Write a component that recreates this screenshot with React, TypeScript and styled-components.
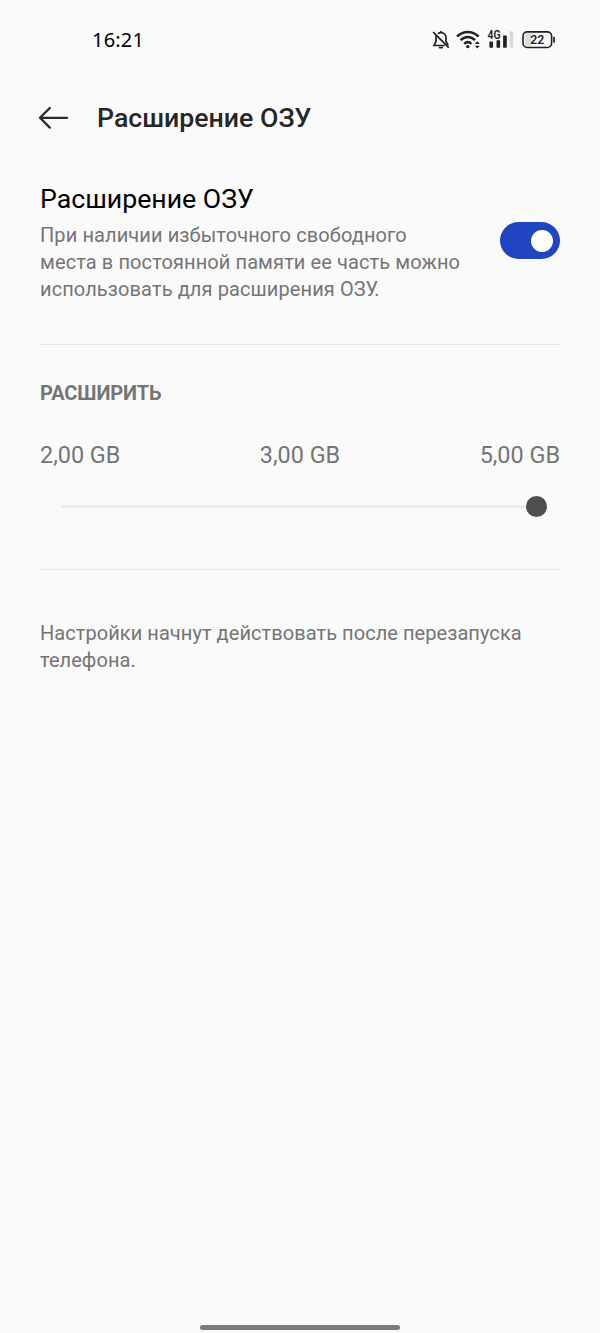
import React from "react";
import styled, { createGlobalStyle } from "styled-components";

const GlobalStyle = createGlobalStyle`
  * { box-sizing: border-box; }
  body { margin: 0; background: #fafafa; }
`;

const Screen = styled.div`
  display: flex;
  flex-direction: column;
  width: 600px;
  height: 1333px;
  background: #fafafa;
  color: #757575;
  font-family: Roboto, sans-serif;
`;

const StatusBar = styled.header`
  display: flex;
  align-items: center;
  justify-content: space-between;
  height: 80px;
  padding: 0 44px 0 92px;
`;

const Clock = styled.time`
  color: #000;
  font: 400 20px/24px "Noto Sans", sans-serif;
  letter-spacing: 0.2px;
`;

const StatusIcons = styled.div`
  display: flex;
  align-items: center;
  gap: 6px;
  color: #222;
  svg { display: block; }
`;

const TitleBar = styled.div`
  display: flex;
  align-items: center;
  gap: 28px;
  height: 76px;
  padding: 0 38px;
`;

const BackButton = styled.button`
  display: flex;
  padding: 0;
  border: 0;
  background: none;
  color: #2a2a2a;
`;

const Title = styled.h1`
  margin: 0;
  color: #262626;
  font-size: 26.7px;
  line-height: 32px;
  font-weight: 500;
`;

const Content = styled.main`
  display: flex;
  flex-direction: column;
  flex: 1;
  padding: 0 40px;
`;

const SettingRow = styled.section`
  display: flex;
  justify-content: space-between;
  height: 189px;
  padding-top: 26px;
  border-bottom: 1px solid #e6e6e6;
`;

const SettingName = styled.h2`
  margin: 0 0 6px;
  color: #000;
  font-size: 26.7px;
  line-height: 34px;
  font-weight: 400;
`;

const Paragraph = styled.p<{ $width: number }>`
  width: ${({ $width }) => $width}px;
  margin: 0;
  font-size: 20px;
  line-height: 27px;
  letter-spacing: ${({ $width }) => ($width < 500 ? 0.1 : 0.06)}px;
`;

const Toggle = styled.button`
  display: flex;
  align-items: center;
  justify-content: flex-end;
  width: 60px;
  height: 37px;
  margin-top: 40px;
  padding: 0 7px;
  border: 0;
  border-radius: 19px;
  background: #2045c0;
`;

const Knob = styled.span`
  width: 22px;
  height: 22px;
  border-radius: 50%;
  background: #fff;
`;

const ExpandSection = styled.section`
  height: 225px;
  padding-top: 35px;
  border-bottom: 1px solid #e6e6e6;
`;

const SectionLabel = styled.h3`
  margin: 0;
  font-size: 20px;
  line-height: 26px;
  font-weight: 700;
  letter-spacing: -0.1px;
`;

const Sizes = styled.div`
  display: flex;
  justify-content: space-between;
  margin-top: 34px;
  font-size: 23.4px;
  line-height: 30px;
`;

const Slider = styled.div`
  display: flex;
  align-items: center;
  height: 21px;
  margin: 26px 13px 0 21px;
`;

const Track = styled.div`
  flex: 1;
  height: 3px;
  border-radius: 2px 0 0 2px;
  background: #ebebeb;
`;

const Thumb = styled.div`
  width: 21px;
  height: 21px;
  border-radius: 50%;
  background: #4e4e4e;
`;

const Note = styled.div`
  padding-top: 50px;
`;

const NavigationHandle = styled.div`
  align-self: center;
  width: 200px;
  height: 5px;
  margin-bottom: 3px;
  border-radius: 3px;
  background: #7c7c7c;
`;

const MutedBell = () => (
  <svg width="18" height="20" viewBox="0 0 18 20" fill="none" stroke="currentColor" strokeWidth="1.7">
    <path d="M6 3.8C6.7 3 7.9 2.6 9 2.6C12 2.6 14 4.8 14 7.6V11.5L16.2 15.3M12.8 15.5H2L4 11.6V7.6Q4 6.2 4.6 5.2M9 1V2.6" />
    <path d="M1.2 2.1L16.8 17.6" />
    <path d="M6.8 17.6H11" />
  </svg>
);

const Wifi = () => (
  <svg width="25" height="20" viewBox="0 0 25 20" fill="none" stroke="currentColor" strokeWidth="2.5">
    <path d="M1 6.5Q6 2 11.8 2T22.6 6.5" />
    <path d="M4.6 10.2Q7.8 6.9 11.8 6.9T19 10.2" />
    <path d="M8.2 13.8Q11.8 10.5 15.4 13.8" />
    <circle cx="11.8" cy="16.6" r="1.7" fill="currentColor" stroke="none" />
    <path d="M18.8 14L21.3 11.2L23.8 14ZM18.8 15.8L21.3 18.6L23.8 15.8Z" fill="currentColor" stroke="none" />
  </svg>
);

const Signal = () => (
  <svg width="29" height="28" viewBox="0 -4 29 28" fill="currentColor">
    <text x="0.6" y="9.2" fontFamily="Roboto, sans-serif" fontSize="12" fontWeight="600" textLength="13" lengthAdjust="spacingAndGlyphs">4G</text>
    <rect x="2.4" y="11.4" width="3.6" height="6.3" rx=".7" />
    <rect x="9.5" y="10.3" width="3.6" height="7.4" rx=".7" />
    <rect x="16.1" y="5.4" width="3.7" height="12.3" rx=".7" />
    <rect x="22.6" y="1.3" width="3.7" height="16.4" rx=".7" fill="#dadada" />
  </svg>
);

const Battery = () => (
  <svg width="34" height="20" viewBox="0 0 34 20" fill="currentColor">
    <path d="M5 3.2H9V16.4H5Q2.7 16.4 2.7 14V5.6Q2.7 3.2 5 3.2Z" fill="#dedede" />
    <rect x="1" y="1.9" width="28.6" height="15.6" rx="4.2" fill="none" stroke="currentColor" strokeWidth="1.6" />
    <rect x="31.2" y="6.8" width="1.7" height="6" rx=".8" />
    <text x="15.2" y="14.1" textAnchor="middle" fontFamily="Roboto, sans-serif" fontSize="12.3" fontWeight="600">22</text>
  </svg>
);

const BackArrow = () => (
  <svg width="31" height="24" viewBox="0 0 31 24" fill="none" stroke="currentColor" strokeWidth="2.3" strokeLinecap="round" strokeLinejoin="round">
    <path d="M11.8 2L2 11.8L11.8 21.6M2 11.8H29" />
  </svg>
);

export default function App() {
  return (
    <Screen>
      <GlobalStyle />
      <StatusBar>
        <Clock>16:21</Clock>
        <StatusIcons>
          <MutedBell />
          <Wifi />
          <Signal />
          <Battery />
        </StatusIcons>
      </StatusBar>
      <TitleBar>
        <BackButton aria-label="Назад"><BackArrow /></BackButton>
        <Title>Расширение ОЗУ</Title>
      </TitleBar>
      <Content>
        <SettingRow>
          <div>
            <SettingName>Расширение ОЗУ</SettingName>
            <Paragraph $width={440}>
              При наличии избыточного свободного<br />
              места в постоянной памяти ее часть можно<br />
              использовать для расширения ОЗУ.
            </Paragraph>
          </div>
          <Toggle role="switch" aria-checked="true"><Knob /></Toggle>
        </SettingRow>
        <ExpandSection>
          <SectionLabel>РАСШИРИТЬ</SectionLabel>
          <Sizes>
            <span>2,00 GB</span>
            <span>3,00 GB</span>
            <span>5,00 GB</span>
          </Sizes>
          <Slider>
            <Track />
            <Thumb />
          </Slider>
        </ExpandSection>
        <Note>
          <Paragraph $width={520}>
            Настройки начнут действовать после перезапуска<br />
            телефона.
          </Paragraph>
        </Note>
      </Content>
      <NavigationHandle />
    </Screen>
  );
}
